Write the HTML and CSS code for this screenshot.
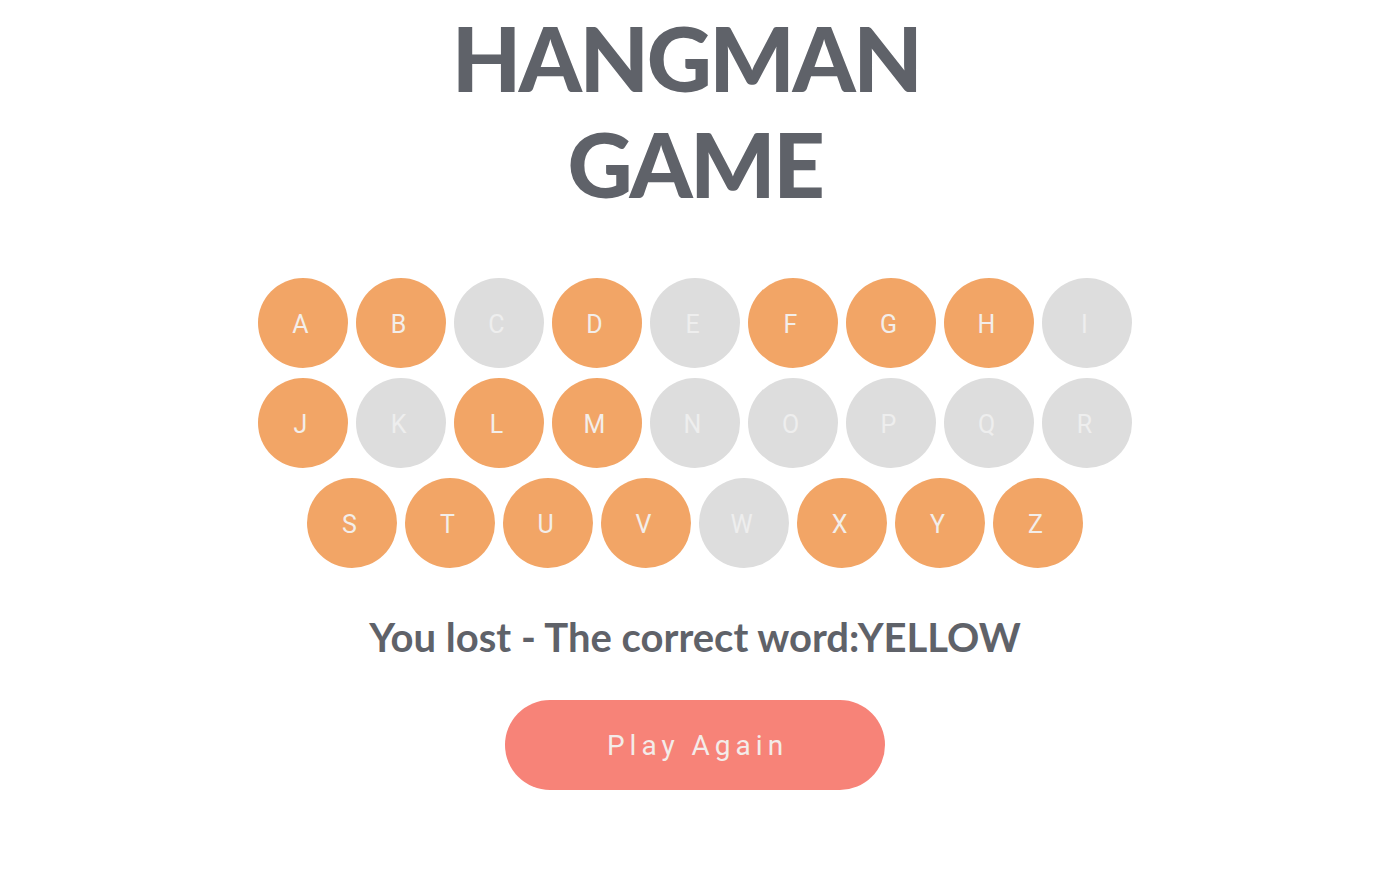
FILE: index.html
```html
<!DOCTYPE html>
<html lang="en">
<head>
<meta charset="utf-8">
<title>Hangman Game</title>
<link rel="stylesheet" href="styles.css">
</head>
<body>
<main class="app">
  <h1 class="title"><span class="title-top">HANGMAN</span><br>GAME</h1>
  <div class="keyboard">
    <div class="row">
      <span class="key used">A</span><span class="key used">B</span><span class="key">C</span><span class="key used">D</span><span class="key">E</span><span class="key used">F</span><span class="key used">G</span><span class="key used">H</span><span class="key">I</span>
    </div>
    <div class="row">
      <span class="key used">J</span><span class="key">K</span><span class="key used">L</span><span class="key used">M</span><span class="key">N</span><span class="key">O</span><span class="key">P</span><span class="key">Q</span><span class="key">R</span>
    </div>
    <div class="row">
      <span class="key used">S</span><span class="key used">T</span><span class="key used">U</span><span class="key used">V</span><span class="key">W</span><span class="key used">X</span><span class="key used">Y</span><span class="key used">Z</span>
    </div>
  </div>
  <p class="result">You lost - The correct word:YELLOW</p>
  <button class="again">Play Again</button>
</main>
</body>
</html>
```

FILE: styles.css
```css
html, body {
  margin: 0;
  padding: 0;
  background: #ffffff;
}

.app {
  display: flex;
  flex-direction: column;
  align-items: center;
  padding: 0 10px 0 0;
  color: #5f6269;
}

.title {
  margin: 0;
  padding-top: 4px;
  font-family: Lato, "Open Sans", sans-serif;
  font-weight: 900;
  font-size: 90px;
  line-height: 106px;
  letter-spacing: -2.5px;
  text-align: center;
  color: #5f6269;
}

.title-top {
  padding-right: 18px;
}

.keyboard {
  margin-top: 62px;
  display: flex;
  flex-direction: column;
  gap: 10px;
}

.row {
  display: flex;
  justify-content: center;
  gap: 8px;
}

.key {
  width: 90px;
  height: 90px;
  border-radius: 50%;
  background: #dddddd;
  color: #eeeeee;
  display: flex;
  align-items: center;
  justify-content: center;
  font-family: Roboto, "Liberation Sans", sans-serif;
  font-size: 25px;
  font-weight: 400;
  padding: 2px 5px 0 0;
  box-sizing: border-box;
}

.key.used {
  background: #f2a566;
  color: #f3eeea;
}

.result {
  margin: 39px 0 0;
  font-family: Lato, "Open Sans", sans-serif;
  font-weight: 700;
  font-size: 40px;
  line-height: 60px;
  color: #5f6269;
}

.again {
  margin-top: 33px;
  width: 380px;
  height: 90px;
  border: none;
  border-radius: 45px;
  background: #f78378;
  color: #f3ece9;
  font-family: Roboto, "Liberation Sans", sans-serif;
  font-size: 28px;
  letter-spacing: 5px;
  text-indent: 5px;
  padding: 0;
}
```
